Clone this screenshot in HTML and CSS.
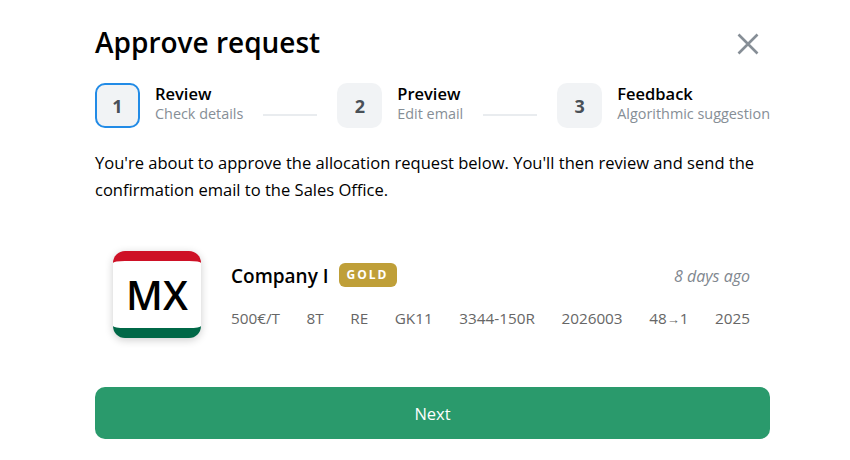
FILE: index.html
```html
<!DOCTYPE html>
<html>
<head>
<title>Approve request</title>
<link rel="stylesheet" href="styles.css">
</head>
<body>
	<div class="modal">
		<div class="header">
			<h1>Approve request</h1>
			<button class="close" aria-label="Close">
				<svg width="24" height="24" viewBox="0 0 24 24"><path d="M2.5 2.5L21.5 21.5M21.5 2.5L2.5 21.5" stroke="#868e96" stroke-width="2.6" fill="none"/></svg>
			</button>
		</div>

		<div class="steps">
			<div class="step">
				<div class="step-num active">1</div>
				<div class="step-text">
					<div class="step-title">Review</div>
					<div class="step-sub">Check details</div>
				</div>
			</div>
			<div class="step-line"></div>
			<div class="step">
				<div class="step-num">2</div>
				<div class="step-text">
					<div class="step-title">Preview</div>
					<div class="step-sub">Edit email</div>
				</div>
			</div>
			<div class="step-line"></div>
			<div class="step">
				<div class="step-num">3</div>
				<div class="step-text">
					<div class="step-title">Feedback</div>
					<div class="step-sub">Algorithmic suggestion</div>
				</div>
			</div>
		</div>

		<p class="intro">You're about to approve the allocation request below. You'll then review and send the confirmation email to the Sales Office.</p>

		<div class="request">
			<div class="flag">MX</div>
			<div class="request-info">
				<div class="request-top">
					<span class="company">Company I</span>
					<span class="badge">GOLD</span>
					<span class="age">8 days ago</span>
				</div>
				<div class="request-meta">
					<span>500€/T</span>
					<span>8T</span>
					<span>RE</span>
					<span>GK11</span>
					<span>3344-150R</span>
					<span>2026003</span>
					<span>48<span class="arrow">→</span>1</span>
					<span>2025</span>
				</div>
			</div>
		</div>

		<button class="next">Next</button>
	</div>
</body>
</html>
```

FILE: styles.css
```css
*{
	box-sizing: border-box;
	margin: 0;
	padding: 0;
}

body{
	background: #fff;
	color: #000;
	font-family: "Open Sans", "Noto Sans", sans-serif;
	overflow: hidden;
}

.modal{
	width: 675px;
	margin-left: 95px;
	padding-top: 22px;
}

.header{
	display: flex;
	justify-content: space-between;
	align-items: center;
	height: 40px;
}

h1{
	font-size: 28px;
	font-weight: 600;
	line-height: 40px;
}

.close{
	border: 0;
	background: none;
	width: 24px;
	height: 24px;
	margin-right: 10px;
	margin-top: 4px;
}

.steps{
	display: flex;
	justify-content: space-between;
	margin-top: 21px;
}

.step{
	display: flex;
	align-items: center;
	gap: 15px;
}

.step-num{
	width: 45px;
	height: 45px;
	border-radius: 10px;
	background: #f1f3f5;
	color: #495057;
	font-size: 18px;
	font-weight: 700;
	display: flex;
	align-items: center;
	justify-content: center;
}

.step-num.active{
	border: 2px solid #228be6;
}

.step-text{
	margin-bottom: 5px;
}

.step-title{
	font-size: 16.5px;
	font-weight: 600;
	line-height: 22px;
}

.step-sub{
	font-size: 14.4px;
	line-height: 18px;
	color: #868e96;
}

.step-line{
	width: 54px;
	height: 2px;
	background: #e9ecef;
	margin-top: 31px;
}

.intro{
	font-size: 16.55px;
	line-height: 27px;
	margin-top: 21px;
}

.request{
	display: flex;
	align-items: center;
	gap: 30px;
	padding: 0 20px 0 18px;
	margin-top: 48px;
}

.flag{
	width: 88px;
	height: 87px;
	flex: none;
	border-radius: 12px;
	border-top: 10px solid #ce1126;
	border-bottom: 10px solid #006847;
	background: #fff;
	box-shadow: 0 2px 8px rgba(0, 0, 0, 0.2);
	font-size: 40px;
	font-weight: 600;
	display: flex;
	align-items: center;
	justify-content: center;
}

.request-info{
	flex: 1;
}

.request-top{
	display: flex;
	align-items: center;
	gap: 10px;
}

.company{
	font-size: 19px;
	font-weight: 600;
	line-height: 23px;
	padding-top: 3px;
}

.badge{
	background: #bf9f38;
	color: #fff;
	font-size: 12px;
	font-weight: 700;
	letter-spacing: 2px;
	padding: 0 8px;
	height: 24px;
	line-height: 24px;
	border-radius: 6px;
}

.age{
	margin-left: auto;
	font-size: 16px;
	font-style: italic;
	line-height: 23px;
	padding-top: 3px;
	color: #7f878f;
}

.request-meta{
	display: flex;
	justify-content: space-between;
	margin-top: 20px;
	font-size: 15.3px;
	color: #666;
}

.arrow{
	font-family: "Liberation Sans", sans-serif;
	font-size: 13px;
	line-height: 1;
}

.next{
	display: block;
	width: 100%;
	height: 52px;
	margin-top: 49px;
	border: 0;
	border-radius: 10px;
	background: #2a9a6c;
	color: #fff;
	font-family: inherit;
	font-size: 16.5px;
	font-weight: 500;
}
```
